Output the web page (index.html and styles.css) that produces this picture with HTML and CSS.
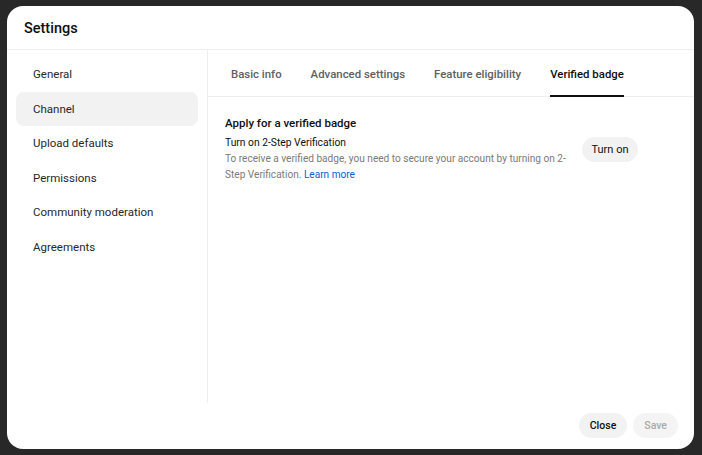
FILE: index.html
```html
<!DOCTYPE html>
<html lang="en">
<head>
    <meta charset="UTF-8">
    <title>Settings</title>
    <link rel="stylesheet" href="styles.css">
</head>
<body>
    <div class="dialog">
        <div class="dialog-header">Settings</div>

        <div class="dialog-body">
            <!-- left navigation -->
            <div class="sidebar">
                <div class="nav-item">General</div>
                <div class="nav-item active">Channel</div>
                <div class="nav-item">Upload defaults</div>
                <div class="nav-item">Permissions</div>
                <div class="nav-item">Community moderation</div>
                <div class="nav-item">Agreements</div>
            </div>

            <!-- channel page -->
            <div class="main">
                <div class="tabs">
                    <div class="tab">Basic info</div>
                    <div class="tab">Advanced settings</div>
                    <div class="tab">Feature eligibility</div>
                    <div class="tab selected">Verified badge</div>
                </div>
                <div class="tab-content">
                    <div class="section-title">Apply for a verified badge</div>
                    <div class="setting-row">
                        <div class="setting-text">
                            <div class="setting-name">Turn on 2-Step Verification</div>
                            <div class="setting-desc">To receive a verified badge, you need to secure your account by turning on 2-Step Verification. <a href="#" class="link">Learn more</a></div>
                        </div>
                        <button class="pill-button turn-on">Turn on</button>
                    </div>
                </div>
            </div>
        </div>

        <div class="dialog-footer">
            <button class="pill-button">Close</button>
            <button class="pill-button disabled">Save</button>
        </div>
    </div>
</body>
</html>
```

FILE: styles.css
```css
body {
    margin: 0;
    padding: 6px 8px 6px 7px;
    background-color: #282828;
    font-family: Roboto, Arial, sans-serif;
    color: #0f0f0f;
}
.dialog {
    width: 687px;
    height: 443px;
    background-color: #fff;
    border-radius: 16px;
    display: flex;
    flex-direction: column;
    overflow: hidden;
}
.dialog-header {
    height: 44px;
    box-sizing: border-box;
    padding: 2px 17px 0;
    display: flex;
    align-items: center;
    font-size: 14.5px;
    font-weight: 500;
    border-bottom: 1px solid #eee;
}
.dialog-body {
    display: flex;
    height: 353px;
}
.sidebar {
    width: 201px;
    box-sizing: border-box;
    padding: 7px 9px 0 9px;
    border-right: 1px solid #eee;
}
.nav-item {
    height: 34.5px;
    display: flex;
    align-items: center;
    padding-left: 17px;
    font-size: 11.5px;
    color: #282828;
    border-radius: 8px;
}
.nav-item.active {
    background-color: #f2f2f2;
}
.main {
    flex: 1;
}
.tabs {
    display: flex;
    gap: 29px;
    height: 47px;
    box-sizing: border-box;
    padding-left: 23px;
    border-bottom: 1px solid #eee;
}
.tab {
    display: flex;
    align-items: center;
    padding-top: 2px;
    font-size: 11.4px;
    font-weight: 500;
    color: #606060;
    border-bottom: 2px solid transparent;
    margin-bottom: -1px;
}
.tab.selected {
    color: #0f0f0f;
    border-bottom-color: #0f0f0f;
}
.tab-content {
    padding: 19px 56px 0 17px;
}
.section-title {
    font-size: 11.5px;
    font-weight: 500;
    margin-bottom: 5px;
}
.setting-row {
    display: flex;
    align-items: flex-start;
}
.setting-text {
    width: 345px;
}
.setting-name {
    font-size: 10.3px;
    line-height: 16px;
}
.setting-desc {
    font-size: 10.1px;
    line-height: 16px;
    color: #7a7a7a;
}
.link {
    color: #065fd4;
    text-decoration: none;
}
.pill-button {
    border: none;
    background-color: #f2f2f2;
    border-radius: 13px;
    height: 25px;
    padding: 0 11px;
    font-family: Roboto, Arial, sans-serif;
    font-size: 10.5px;
    font-weight: 500;
    color: #0f0f0f;
}
.setting-row .turn-on {
    margin-left: auto;
    margin-top: 2px;
    width: 56px;
    padding: 0;
    font-size: 11px;
    font-weight: 400;
}
.dialog-footer {
    flex: 1;
    display: flex;
    justify-content: flex-end;
    align-items: flex-start;
    gap: 6px;
    padding: 10px 16px 0 0;
}
.pill-button.disabled {
    color: #aaa;
    background-color: #f4f4f4;
}
```
